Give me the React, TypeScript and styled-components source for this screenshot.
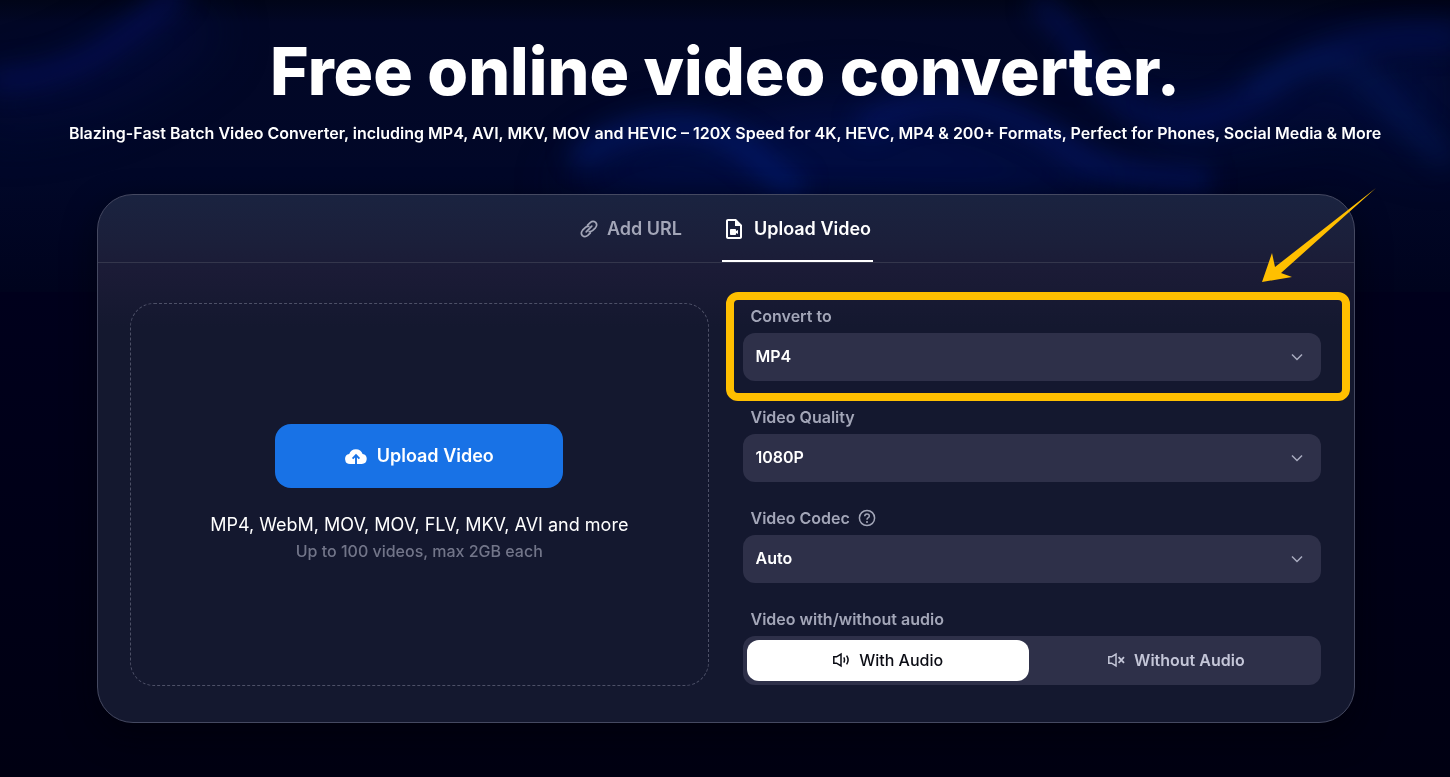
import React, { useState } from "react";
import styled, { createGlobalStyle } from "styled-components";
import { MdOutlineVideoFile } from "react-icons/md";

const GlobalStyle = createGlobalStyle`
  *, *::before, *::after { box-sizing: border-box; }
  body {
    margin: 0;
    background: #000014;
    color: #ffffff;
    font-family: Inter, "Liberation Sans", sans-serif;
  }
  button, select { font-family: inherit; }
`;

const Page = styled.div`
  position: relative;
  min-height: 100vh;
  padding: 34px 0 54px;
  overflow: hidden;
  background: linear-gradient(180deg, #00001c 292px, #000012 100%);
`;

const Backdrop = styled.svg`
  position: absolute;
  top: 0;
  left: 0;
  width: 100%;
  height: 292px;
`;

const Hero = styled.header`
  position: relative;
  text-align: center;
`;

const Title = styled.h1`
  margin: 0;
  font-size: 66px;
  line-height: 74px;
  font-weight: 800;
`;

const Subtitle = styled.p`
  margin: 13px 0 0;
  font-size: 16px;
  line-height: 24px;
  font-weight: 600;
  white-space: nowrap;
`;

const Main = styled.main`
  position: relative;
  padding: 49px 95px 0 97px;
`;

const Card = styled.section`
  border: 1px solid #454961;
  border-radius: 36px;
  background: linear-gradient(180deg, #1a2340 0, #1b1f3a 48px, #1b1b36 76px, #14182f 132px, #14182f 100%);
  box-shadow: 0 12px 32px rgba(0, 0, 8, 0.6);
`;

const Tabs = styled.div`
  display: flex;
  justify-content: center;
  gap: 38px;
  height: 68px;
  border-bottom: 1px solid #34364c;
`;

const Tab = styled.button<{ $active: boolean }>`
  display: flex;
  align-items: center;
  gap: 8px;
  padding: 2px 2px 0 0;
  border: 0;
  border-bottom: 2px solid ${(p) => (p.$active ? "#ffffff" : "transparent")};
  background: none;
  color: ${(p) => (p.$active ? "#ffffff" : "#a3a6b8")};
  font-size: 18px;
  line-height: 24px;
  font-weight: 600;
  cursor: pointer;
`;

const Body = styled.div`
  display: grid;
  grid-template-columns: 1fr 1fr;
  gap: 34px;
  padding: 40px 33px 36px 32px;
`;

const DropZone = styled.div`
  display: flex;
  flex-direction: column;
  align-items: center;
  justify-content: center;
  min-height: 383px;
  padding-bottom: 2px;
  border: 1px dashed #4d5067;
  border-radius: 24px;
`;

const UploadButton = styled.button`
  display: flex;
  align-items: center;
  justify-content: center;
  gap: 10px;
  width: 288px;
  height: 64px;
  border: 0;
  border-radius: 16px;
  background: #1872e6;
  color: #ffffff;
  font-size: 18px;
  line-height: 24px;
  font-weight: 600;
  cursor: pointer;
`;

const Formats = styled.p`
  margin: 24px 0 0;
  font-size: 18px;
  line-height: 26px;
  font-weight: 400;
`;

const Limits = styled.p`
  margin: 0;
  color: #727589;
  font-size: 16px;
  line-height: 26px;
  font-weight: 500;
`;

const Options = styled.div`
  display: flex;
  flex-direction: column;
  gap: 23px;
`;

const Field = styled.div`
  position: relative;
  display: flex;
  flex-direction: column;
  gap: 4px;
`;

const labelText = `
  display: flex;
  align-items: center;
  gap: 8px;
  padding-left: 8px;
  color: #a3a6b8;
  font-size: 16px;
  line-height: 26px;
  font-weight: 600;
`;

const Label = styled.label`${labelText}`;
const GroupLabel = styled.span`${labelText}`;

const SelectWrap = styled.div`
  display: grid;
  align-items: center;
`;

const Select = styled.select`
  grid-area: 1 / 1;
  width: 100%;
  height: 48px;
  padding: 0 48px 2px 13px;
  border: 0;
  border-radius: 12px;
  appearance: none;
  background: #2e3049;
  color: #ffffff;
  font-size: 16px;
  font-weight: 600;
`;

const Chevron = styled.svg`
  grid-area: 1 / 1;
  justify-self: end;
  margin-right: 18px;
  pointer-events: none;
`;

const Segment = styled.div`
  display: grid;
  grid-template-columns: 1fr 1fr;
  gap: 6px;
  height: 49px;
  padding: 4px;
  border-radius: 12px;
  background: #2e3049;
`;

const SegmentButton = styled.button<{ $active: boolean }>`
  display: flex;
  align-items: center;
  justify-content: center;
  gap: 9px;
  padding: 0 0 2px;
  border: 0;
  border-radius: 12px;
  background: ${(p) => (p.$active ? "#ffffff" : "transparent")};
  color: ${(p) => (p.$active ? "#0b0c14" : "#c4c6d8")};
  font-size: 16px;
  line-height: 24px;
  font-weight: ${(p) => (p.$active ? 500 : 600)};
  cursor: pointer;
`;

const Highlight = styled.div`
  position: absolute;
  top: -11px;
  left: -17px;
  right: -29px;
  bottom: -20px;
  border: 8px solid #ffbf00;
  border-radius: 12px;
  pointer-events: none;
`;

const Arrow = styled.svg`
  position: absolute;
  right: -34px;
  top: -112px;
`;

function Waves() {
  return (
    <Backdrop viewBox="0 0 1450 292" preserveAspectRatio="none" aria-hidden="true">
      <defs>
        <linearGradient id="sky" x1="0" y1="0" x2="0" y2="1">
          <stop offset="0" stopColor="#010518" />
          <stop offset="0.08" stopColor="#020726" />
          <stop offset="0.6" stopColor="#010728" />
          <stop offset="1" stopColor="#00031d" />
        </linearGradient>
        <filter id="soft" x="-30%" y="-60%" width="160%" height="220%" colorInterpolationFilters="sRGB">
          <feGaussianBlur stdDeviation="12" />
        </filter>
        <filter id="wide" x="-50%" y="-80%" width="200%" height="260%" colorInterpolationFilters="sRGB">
          <feGaussianBlur stdDeviation="26" />
        </filter>
      </defs>
      <rect width="1450" height="292" fill="url(#sky)" />
      <g filter="url(#wide)">
        <path d="M-20 90Q70 80 140 20L190 -10L220 40Q120 130 -20 130Z" fill="#020b42" opacity="0.5" />
        <path d="M560 190Q640 110 700 130Q820 80 950 110Q1080 150 1130 190L1000 210L620 200Z" fill="#01104e" opacity="0.65" />
        <path d="M1080 60Q1200 130 1340 60L1450 40V160L1340 120L1180 150Z" fill="#020f4e" opacity="0.5" />
      </g>
      <g filter="url(#soft)">
        <path d="M-10 80Q60 80 110 46Q150 20 180 -10" fill="none" stroke="#04105c" strokeWidth="22" opacity="0.65" />
        <path d="M575 160Q625 122 690 126Q735 132 770 170L800 190" fill="none" stroke="#032082" strokeWidth="24" opacity="0.5" />
        <path d="M860 128Q920 92 985 108Q1040 124 1080 158Q1130 180 1210 180" fill="none" stroke="#051a76" strokeWidth="24" opacity="0.5" />
        <path d="M1035 0Q1070 30 1090 70Q1130 125 1190 120Q1240 112 1290 70Q1350 30 1460 38" fill="none" stroke="#041368" strokeWidth="22" opacity="0.5" />
        <path d="M1250 90Q1330 40 1375 84Q1410 130 1450 160" fill="none" stroke="#052068" strokeWidth="20" opacity="0.4" />
      </g>
    </Backdrop>
  );
}

function LinkIcon() {
  return (
    <svg width="20" height="20" viewBox="0 0 20 20" fill="none" stroke="currentColor" strokeWidth="1.7" strokeLinecap="round" aria-hidden="true">
      <path d="M7.2 12.8 12.8 7.2" />
      <path d="M8.6 6.2 11.2 3.6Q14 1.200 16.600 3.400Q18.800 6 16.400 8.800L13.800 11.400Q12.200 12.900 10.200 12.600" />
      <path d="M11.400 13.800 8.800 16.400Q6 18.800 3.400 16.600Q1.200 14 3.600 11.200L6.200 8.600Q7.800 7.100 9.800 7.400" />
    </svg>
  );
}

function CloudIcon() {
  return (
    <svg width="22" height="18" viewBox="0 0 22 18" aria-hidden="true">
      <path d="M5.200 17A5.100 5.100 0 0 1 4.200 6.900A7.100 7.100 0 0 1 17.600 6.900A5.100 5.100 0 0 1 16.800 17Z" fill="currentColor" />
      <path d="M11 17.500V8.500M7.600 11.600 11 8.200 14.400 11.600" fill="none" stroke="#1872e6" strokeWidth="1.900" />
    </svg>
  );
}

function SpeakerIcon({ muted }: { muted?: boolean }) {
  return (
    <svg width="18" height="16" viewBox="0 0 18 16" fill="none" stroke="currentColor" strokeWidth="1.500" aria-hidden="true">
      <path d="M1.800 4.800H4.600L9 2V14L4.600 11.200H1.800Z" />
      {muted ? (
        <path d="M11.600 5.200 17 10.800M17 5.200 11.600 10.800" strokeWidth="1.800" />
      ) : (
        <path d="M11.800 5.400Q13.200 8 11.800 10.600M14.600 3.600Q17.600 8 14.600 12.400" />
      )}
    </svg>
  );
}

function HelpIcon() {
  return (
    <svg width="18" height="18" viewBox="0 0 18 18" fill="none" stroke="currentColor" strokeWidth="1.500" aria-hidden="true">
      <circle cx="9" cy="9" r="7.600" />
      <path d="M6.700 7.200Q6.800 4.900 9 4.900Q11.300 4.900 11.300 7Q11.300 8.200 10 8.900Q9 9.500 9 10.800" />
      <circle cx="9" cy="12.900" r="1" fill="currentColor" stroke="none" />
    </svg>
  );
}

interface PickerProps {
  id: string;
  label: string;
  options: string[];
  help?: boolean;
  children?: React.ReactNode;
}

function Picker({ id, label, options, help, children }: PickerProps) {
  return (
    <Field>
      <Label htmlFor={id}>
        {label}
        {help && <HelpIcon />}
      </Label>
      <SelectWrap>
        <Select id={id}>
          {options.map((o) => (
            <option key={o}>{o}</option>
          ))}
        </Select>
        <Chevron width="12" height="8" viewBox="0 0 12 8" fill="none" stroke="#a9acc0" strokeWidth="1.500" aria-hidden="true">
          <path d="M1 1.500 6 6.500 11 1.500" />
        </Chevron>
      </SelectWrap>
      {children}
    </Field>
  );
}

export default function App() {
  const [tab, setTab] = useState<"url" | "upload">("upload");
  const [audio, setAudio] = useState(true);

  return (
    <>
      <GlobalStyle />
      <Page>
        <Waves />
        <Hero>
          <Title>Free online video converter.</Title>
          <Subtitle>
            Blazing-Fast Batch Video Converter, including MP4, AVI, MKV, MOV and HEVIC – 120X Speed for 4K, HEVC, MP4
            &amp; 200+ Formats, Perfect for Phones, Social Media &amp; More
          </Subtitle>
        </Hero>
        <Main>
          <Card>
            <Tabs>
              <Tab type="button" $active={tab === "url"} onClick={() => setTab("url")}>
                <LinkIcon />
                Add URL
              </Tab>
              <Tab type="button" $active={tab === "upload"} onClick={() => setTab("upload")}>
                <MdOutlineVideoFile size={24} />
                Upload Video
              </Tab>
            </Tabs>
            <Body>
              <DropZone>
                <UploadButton type="button">
                  <CloudIcon />
                  Upload Video
                </UploadButton>
                <Formats>MP4, WebM, MOV, MOV, FLV, MKV, AVI and more</Formats>
                <Limits>Up to 100 videos, max 2GB each</Limits>
              </DropZone>
              <Options>
                <Picker id="format" label="Convert to" options={["MP4"]}>
                  <Highlight>
                    <Arrow width="114" height="94" viewBox="0 0 114 94" fill="#ffbf00" aria-hidden="true">
                      <path d="M0 94 10 65 13 79 114 0 19 85 30 89Z" />
                    </Arrow>
                  </Highlight>
                </Picker>
                <Picker id="quality" label="Video Quality" options={["1080P"]} />
                <Picker id="codec" label="Video Codec" options={["Auto"]} help />
                <Field role="group" aria-labelledby="audio-label">
                  <GroupLabel id="audio-label">Video with/without audio</GroupLabel>
                  <Segment>
                    <SegmentButton type="button" $active={audio} aria-pressed={audio} onClick={() => setAudio(true)}>
                      <SpeakerIcon />
                      With Audio
                    </SegmentButton>
                    <SegmentButton type="button" $active={!audio} aria-pressed={!audio} onClick={() => setAudio(false)}>
                      <SpeakerIcon muted />
                      Without Audio
                    </SegmentButton>
                  </Segment>
                </Field>
              </Options>
            </Body>
          </Card>
        </Main>
      </Page>
    </>
  );
}
